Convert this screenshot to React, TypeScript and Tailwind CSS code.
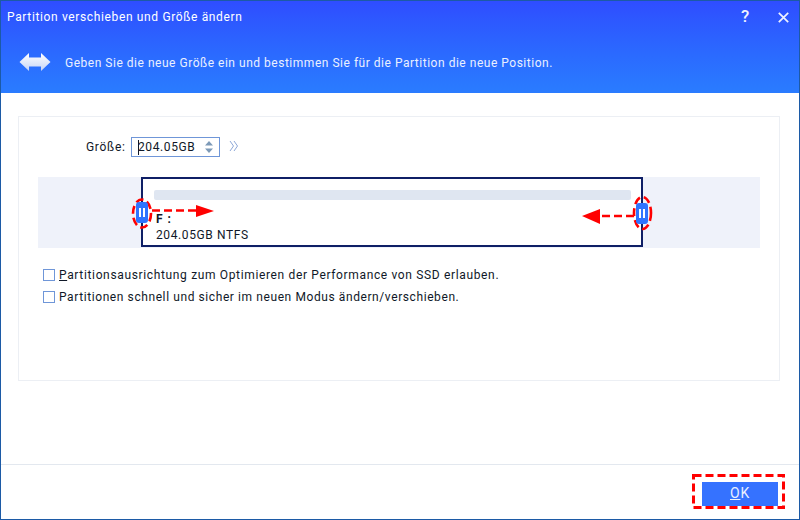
import React from "react";

const font = { fontFamily: '"Roboto", "Liberation Sans", sans-serif' };

function Check({ children, spacing }: { children: React.ReactNode; spacing: string }) {
  return (
    <label className="flex items-center gap-[4px] h-[22px]">
      <span className="w-[12px] h-[12px] border border-[#6f96d8] bg-white shrink-0" />
      <span className={`text-[12px] text-[#101828] ${spacing}`}>{children}</span>
    </label>
  );
}

function Handle({ className }: { className: string }) {
  return (
    <div className={`absolute z-10 w-[12px] h-[21px] rounded-[3px] bg-[#2f74ff] flex items-center justify-center gap-[2px] ${className}`}>
      <span className="w-[2px] h-[9px] bg-white" />
      <span className="w-[2px] h-[9px] bg-white" />
    </div>
  );
}

export default function App() {
  return (
    <div className="w-[800px] h-[520px] relative flex flex-col bg-white border border-[#1c5aa6] overflow-hidden" style={font}>
      <div className="h-[92px] flex flex-col shrink-0 bg-gradient-to-b from-[#2f4dff] to-[#2a7cff] text-white">
        <div className="h-[32px] flex items-center pl-[6px] pr-[10px] text-[12px] tracking-[0.64px]">
          <span className="flex-1">Partition verschieben und Größe ändern</span>
          <span className="text-[17px] font-medium mr-[28px] text-[#eef2ff]">?</span>
          <svg width="11" height="11" viewBox="0 0 11 11">
            <path d="M0.8 0.8L10.2 10.2M10.2 0.8L0.8 10.2" stroke="#eef2ff" strokeWidth="1.7" />
          </svg>
        </div>
        <div className="flex items-center h-[28px] mt-[15px] pl-[18px] gap-[14px]">
          <svg width="32" height="20" viewBox="0 0 32 20">
            <defs>
              <linearGradient id="ar" x1="0" y1="0" x2="0" y2="1">
                <stop offset="0" stopColor="#ffffff" />
                <stop offset="1" stopColor="#c4d4f6" />
              </linearGradient>
            </defs>
            <path d="M0.5 10L10 1V5.5H22V1L31.5 10L22 19V14.5H10V19Z" fill="url(#ar)" />
          </svg>
          <span className="text-[12px] tracking-[0.52px] text-[#eaf0ff] pt-[1px]">
            Geben Sie die neue Größe ein und bestimmen Sie für die Partition die neue Position.
          </span>
        </div>
      </div>

      <div className="flex-1 pl-[17px] pt-[23px]">
        <div className="w-[762px] h-[265px] border border-[#eceff4] px-[19px]">
          <div className="flex items-center h-[60px] pl-[48px]">
            <span className="text-[12px] tracking-[0.7px] text-[#101828] w-[45px]">Größe:</span>
            <div className="w-[89px] h-[20px] border border-[#6f96d8] flex items-center pl-[6px] text-[12px] tracking-[0.6px] text-[#101828] relative">
              <span className="absolute left-[6px] top-[2px] w-px h-[15px] bg-[#101828]" />
              204.05GB
              <svg width="10" height="14" viewBox="0 0 10 14" className="absolute right-[5px] top-[2px]">
                <path d="M5 1L9 5.5H1Z M5 13L9 8.5H1Z" fill="#7d9ab8" />
              </svg>
            </div>
            <svg width="10" height="12" viewBox="0 0 10 12" className="ml-[9px] -mt-[2px]">
              <path d="M1 1L4.5 6L1 11M5 1L8.5 6L5 11" fill="none" stroke="#8ea8d8" strokeWidth="1" />
            </svg>
          </div>

          <div className="h-[71px] bg-[#eff2fa] pl-[103px] relative">
            <div className="w-[502px] h-[70px] border-2 border-[#0f1f66] bg-white pt-[11px] pl-[11px] pr-[10px]">
              <div className="h-[10px] rounded-[2px] bg-[#dfe6f1]" />
              <div className="mt-[12px] pl-[2px] text-[12px] font-bold leading-[15px] tracking-[1px] text-[#101828]">F :</div>
              <div className="mt-[1px] pl-[2px] text-[12px] leading-[14px] tracking-[0.6px] text-[#101828]">204.05GB NTFS</div>
            </div>
            <Handle className="left-[98px] top-[25px]" />
            <Handle className="left-[598px] top-[26px]" />
          </div>

          <div className="pt-[16px] pl-[5px] flex flex-col">
            <Check spacing="tracking-[0.65px]"><span className="underline">P</span>artitionsausrichtung zum Optimieren der Performance von SSD erlauben.</Check>
            <Check spacing="tracking-[0.59px]">Partitionen schnell und sicher im neuen Modus ändern/verschieben.</Check>
          </div>
        </div>
      </div>

      <div className="h-[55px] shrink-0 border-t border-[#e3e8ef] flex items-center justify-end pr-[21px] pt-[3px]">
        <button className="w-[76px] h-[24px] bg-[#3572ff] text-[#eaf0ff] text-[14px] tracking-[0.8px]">
          <span className="underline">O</span>K
        </button>
      </div>

      <svg className="absolute left-[-1px] top-[-1px] pointer-events-none" width="800" height="520" viewBox="0 0 800 520" fill="none">
        <g stroke="#ff0000" strokeWidth="2.6" strokeDasharray="8 4">
          <ellipse cx="142" cy="213.5" rx="9" ry="14" />
          <ellipse cx="642.5" cy="213" rx="8.5" ry="16" />
          <rect x="693.5" y="475.5" width="90" height="32" strokeWidth="3" />
          <path d="M152 210.5H196" />
          <path d="M634 216H600" />
        </g>
        <path d="M214 211L196 205V217Z" fill="#ff0000" />
        <path d="M582 216L600 209V224Z" fill="#ff0000" />
      </svg>
    </div>
  );
}
